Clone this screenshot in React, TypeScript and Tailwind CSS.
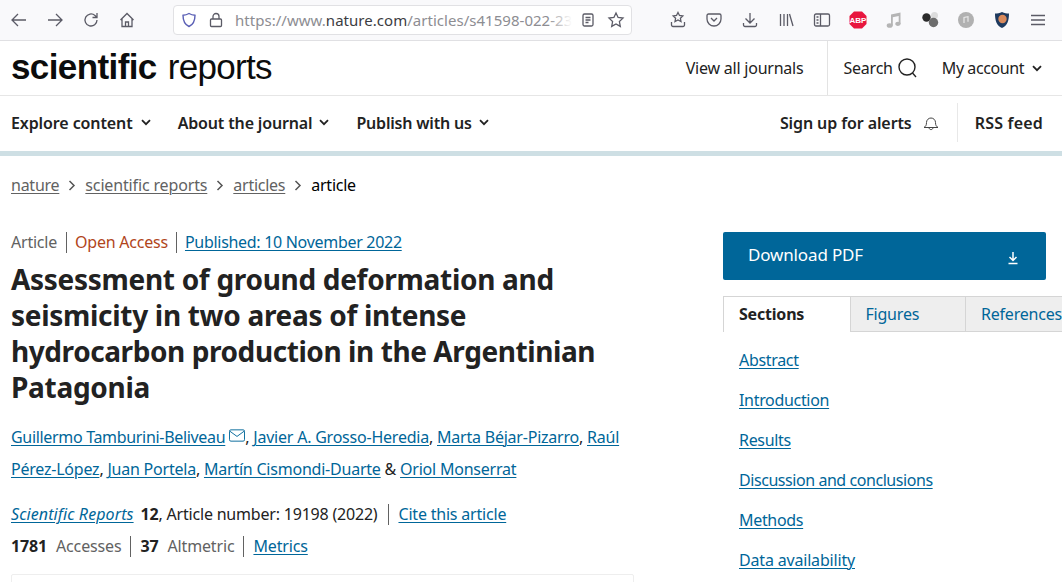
import React from "react";

const ic = "fill-none stroke-[#5b5b66] stroke-[1.3]";
const F = "font-['Noto_Sans','Open_Sans',sans-serif]";

function Chev({ cls = "" }: { cls?: string }) {
  return (
    <svg width="10" height="7" viewBox="0 0 10 7" className={cls}>
      <path d="M1 1.2 5 5.2 9 1.2" fill="none" stroke="#222" strokeWidth="1.8" />
    </svg>
  );
}

function Sep() {
  return (
    <svg width="8" height="11" viewBox="0 0 8 11" className="mx-[9px]">
      <path d="M1.5 1 6 5.5 1.5 10" fill="none" stroke="#555" strokeWidth="1.5" />
    </svg>
  );
}

function Toolbar() {
  return (
    <div className="h-[41px] bg-[#f9f9fb] border-b border-[#e0e0e3] flex items-center pl-[10px] shrink-0">
      <div className="flex items-center gap-[18px]">
        <svg width="18" height="18" viewBox="0 0 18 18" className={ic}><path d="M16 9H2M8 3 2 9l6 6" /></svg>
        <svg width="18" height="18" viewBox="0 0 18 18" className={ic}><path d="M2 9h14M10 3l6 6-6 6" /></svg>
        <svg width="18" height="18" viewBox="0 0 18 18" className={ic}><path d="M15 9a6 6 0 1 1-2-4.500L15 6.500M15 2v4.500h-4.500" /></svg>
        <svg width="18" height="18" viewBox="0 0 18 18" className={ic}><path d="M2.500 9 9 2.500 15.500 9M4 8v7.500h10V8M7.500 15.500V11h3v4.500" /></svg>
      </div>
      <div className="ml-[37px] w-[459px] h-[30px] bg-white rounded-[4px] border border-[#e1e1e4] flex items-center pl-[6px]">
        <svg width="18" height="18" viewBox="0 0 18 18" className="fill-none stroke-[#5a5fb5] stroke-[1.4]"><path d="M9 2.500c2 1.200 4 1.700 6 1.800 0 5-2 9.500-6 11.200C5 13.800 3 9.300 3 4.300c2-.1 4-.6 6-1.800Z" /></svg>
        <svg width="16" height="16" viewBox="0 0 16 16" className={`ml-[10px] ${ic}`}><rect x="2.500" y="7" width="11" height="7.500" rx="1" /><path d="M5 7V4.500a3 3 0 0 1 6 0V7" /></svg>
        <div className={`relative ml-[11px] w-[337px] overflow-hidden whitespace-nowrap text-[15px] tracking-[0.03px] text-[#8d8d92] ${F}`}>
          https://www.<span className="text-[#3c3c42]">nature.com</span>/articles/s41598-022-23
          <div className="absolute right-0 top-0 bottom-0 w-[24px] bg-gradient-to-r from-transparent to-white" />
        </div>
        <svg width="16" height="16" viewBox="0 0 16 16" className={`ml-[8px] ${ic}`}><rect x="3" y="2" width="10" height="12" rx="1.500" /><path d="M5.500 5.500h5M5.500 8h5M5.500 10.500h3" /></svg>
        <svg width="18" height="18" viewBox="0 0 18 18" className={`ml-[11px] ${ic}`}><path d="m9 2 2.100 4.500 4.900.6-3.600 3.400.9 4.900L9 13l-4.300 2.400.9-4.900L2 7.100l4.900-.6Z" /></svg>
      </div>
      <div className="ml-[37px] flex items-center gap-[18px]">
        <svg width="18" height="18" viewBox="0 0 18 18" className={ic}><path d="m9 1.500 1.500 3 3.300.5-2.400 2.300.6 3.200L9 9l-3 1.500.6-3.200L4.200 5l3.300-.5ZM2.500 11v3a1.500 1.500 0 0 0 1.500 1.500h10a1.500 1.500 0 0 0 1.500-1.500v-3" /></svg>
        <svg width="18" height="18" viewBox="0 0 18 18" className={ic}><path d="M3.500 3h11A1.500 1.500 0 0 1 16 4.500V8a7 7 0 0 1-14 0V4.500A1.500 1.500 0 0 1 3.500 3ZM6 7l3 3 3-3" /></svg>
        <svg width="18" height="18" viewBox="0 0 18 18" className={ic}><path d="M9 2v10M4.500 7.500 9 12l4.500-4.500M2.500 12v2a1.500 1.500 0 0 0 1.500 1.500h10a1.500 1.500 0 0 0 1.500-1.500v-2" /></svg>
        <svg width="18" height="18" viewBox="0 0 18 18" className={ic}><path d="M3.500 3v12M7 3v12M10.500 3v12M12.500 3l3.500 12" /></svg>
        <svg width="18" height="18" viewBox="0 0 18 18" className={ic}><rect x="1.500" y="3" width="15" height="12" rx="1.500" /><path d="M7.500 3v12M3.500 6h2M3.500 9h2M3.500 12h2" /></svg>
        <svg width="18" height="18" viewBox="0 0 18 18">
          <polygon points="5,.5 13,.5 17.500,5 17.500,13 13,17.500 5,17.500 .5,13 .5,5" fill="#e8163e" />
          <text x="9" y="11.800" textAnchor="middle" fontSize="8" fontWeight="700" fill="#fff" fontFamily="Liberation Sans">ABP</text>
        </svg>
        <svg width="18" height="18" viewBox="0 0 18 18" fill="#b5b5b5"><path d="M6 3.500 15.500 1.500v11.200h-1.800V5L7.800 6.200v8.300H6Z" /><ellipse cx="4.700" cy="14.500" rx="3" ry="2.300" /><ellipse cx="13" cy="12.800" rx="2.700" ry="2.100" /></svg>
        <svg width="18" height="18" viewBox="0 0 18 18"><circle cx="13.500" cy="4.500" r="3.500" fill="#dcdcdc" /><circle cx="5.500" cy="6.500" r="4.200" fill="#2b2b2b" /><circle cx="12.500" cy="11.500" r="4.700" fill="#6d6d6d" /></svg>
        <svg width="18" height="18" viewBox="0 0 18 18"><circle cx="9" cy="9" r="8" fill="#b1b1b1" /><path d="M7 12V6.500l4-.8v5" fill="none" stroke="#e8e8e8" strokeWidth="1.200" /></svg>
        <svg width="18" height="18" viewBox="0 0 18 18"><path d="M9 1c2.500 1.200 4.500 1.500 7 1.500 0 7-1.500 12-7 14.500C3.500 14.500 2 9.500 2 2.500 4.500 2.500 6.500 2.200 9 1Z" fill="#1e3a5f" /><circle cx="9.500" cy="8" r="4.200" fill="#d98a5c" /></svg>
        <svg width="18" height="18" viewBox="0 0 18 18" className={ic}><path d="M2 4.500h14M2 9h14M2 13.500h14" /></svg>
      </div>
    </div>
  );
}

function Header() {
  return (
    <div className="h-[55px] border-b border-[#e6e6e6] flex items-stretch pl-[11px] shrink-0">
      <div className="flex items-center font-['Liberation_Sans',sans-serif] text-[35px] leading-none text-[#0c0c0c] whitespace-nowrap pb-[4px]">
        <span className="font-bold tracking-[-0.6px]">scientific</span>
        <span className="ml-[11px] tracking-[-0.7px]">reports</span>
      </div>
      <div className="ml-auto flex items-center tracking-[-0.22px]">
        <a className="text-[#222]">View all journals</a>
        <div className="ml-[24px] w-px self-stretch bg-[#e3e3e3]" />
        <a className="ml-[15px] text-[#222]">Search</a>
        <svg width="22" height="22" viewBox="0 0 22 22" className="ml-[4px] fill-none stroke-[#222] stroke-[1.4]"><circle cx="10" cy="10" r="8" /><path d="m15.500 16 3.500 4" /></svg>
        <a className="ml-[23px] text-[#222] tracking-[-0.42px]">My account</a>
        <Chev cls="ml-[8px] mr-[20px]" />
      </div>
    </div>
  );
}

function Nav() {
  return (
    <div className="h-[55px] pb-[2px] flex items-center pl-[11px] font-semibold text-[#222] shrink-0 tracking-[-0.1px]">
      <span>Explore content</span>
      <Chev cls="ml-[8px]" />
      <span className="ml-[27px] tracking-[-0.15px]">About the journal</span>
      <Chev cls="ml-[7px]" />
      <span className="ml-[27px] tracking-[-0.2px]">Publish with us</span>
      <Chev cls="ml-[7px]" />
      <span className="ml-auto">Sign up for alerts</span>
      <svg width="18" height="18" viewBox="0 0 18 18" className="ml-[10px] fill-none stroke-[#444] stroke-[1]"><path d="M2 13.500c1.500-1 2.500-2 2.500-5a4.500 4.500 0 0 1 9 0c0 3 1 4 2.500 5ZM7 13.500c0 2.800 4 2.800 4 0" /></svg>
      <div className="ml-[17px] w-px h-[39px] bg-[#e8e8e8]" />
      <span className="ml-[17px] mr-[19px] tracking-[0.2px]">RSS feed</span>
    </div>
  );
}

const link = "text-[#069] underline underline-offset-[2px] decoration-1";

function Left() {
  return (
    <div className="w-[623px] ml-[11px] shrink-0 tracking-[-0.22px]">
      <div className="flex items-center h-[22px] leading-[22px]">
        <span className="text-[#626262]">Article</span>
        <span className="ml-[9px] mr-[8px] w-px h-[21px] bg-[#626262]" />
        <span className="text-[#b1451b]">Open Access</span>
        <span className="ml-[8px] mr-[8px] w-px h-[21px] bg-[#626262]" />
        <a className={`${link} tracking-[-0.3px]`}>Published: 10 November 2022</a>
      </div>
      <h1 className="mt-[8px] text-[28px] leading-[36px] font-bold text-[#222] w-[600px] tracking-[-0.3px]">
        Assessment of ground deformation and seismicity in two areas of intense <span className="tracking-[-0.42px]">hydrocarbon production in the Argentinian</span> Patagonia
      </h1>
      <div className="mt-[16px] leading-[32px] text-[#222] w-[620px]">
        <a className={`${link} tracking-[-0.32px]`}>Guillermo Tamburini-Beliveau</a>
        <svg width="16" height="13" viewBox="0 0 17 13" className="inline ml-[4px] align-[1px] fill-none stroke-[#069]"><rect x=".5" y=".5" width="16" height="12" rx="1.500" /><path d="m1 2 7.500 5.500L16 2" /></svg>
        , <a className={link}>Javier A. Grosso-Heredia</a>, <a className={link}>Marta Béjar-Pizarro</a>, <a className={link}>Raúl</a> <a className={link}>Pérez-López</a>, <a className={link}>Juan Portela</a>, <a className={link}>Martín Cismondi-Duarte</a> &amp; <a className={link}>Oriol Monserrat</a>
      </div>
      <div className="mt-[17px] flex items-center h-[24px] text-[#222] tracking-[-0.2px]">
        <a className={`${link} italic tracking-[0.1px]`}>Scientific Reports</a>
        <b className="ml-[7px] font-bold">12</b>
        <span>, Article number: 19198 (2022)</span>
        <span className="ml-[11px] mr-[9px] w-px h-[21px] bg-[#626262]" />
        <a className={link}>Cite this article</a>
      </div>
      <div className="mt-[8px] flex items-center h-[24px] tracking-[-0.15px]">
        <b className="font-bold text-[#222]">1781</b>
        <span className="ml-[9px] text-[#626262]">Accesses</span>
        <span className="mx-[9px] w-px h-[21px] bg-[#626262]" />
        <b className="font-bold text-[#222]">37</b>
        <span className="ml-[9px] text-[#626262]">Altmetric</span>
        <span className="mx-[9px] w-px h-[21px] bg-[#626262]" />
        <a className={link}>Metrics</a>
      </div>
      <div className="mt-[16px] h-[40px] border border-[#eeeeee] rounded-[2px]" />
    </div>
  );
}

const sections = [
  { t: "Abstract", c: "tracking-[-0.32px]" },
  { t: "Introduction", c: "tracking-[-0.32px]" },
  { t: "Results", c: "tracking-[-0.32px]" },
  { t: "Discussion and conclusions", c: "tracking-[-0.44px]" },
  { t: "Methods", c: "tracking-[-0.32px]" },
  { t: "Data availability", c: "tracking-[-0.18px]" },
];

function Right() {
  return (
    <div className="ml-[89px] mt-[1px] w-[339px] shrink-0 overflow-hidden">
      <div className="w-[323px] h-[48px] bg-[#069] rounded-[2px] flex items-center pl-[25px] pr-[27px] text-white text-[17px] tracking-[-0.15px]">
        <span className="mb-[2px]">Download PDF</span>
        <svg width="12" height="14" viewBox="0 0 12 14" className="ml-auto mt-[4px] fill-none stroke-white stroke-[1.500]"><path d="M6 1v8M2.500 6 6 9.500 9.500 6M1.500 12.500h9" /></svg>
      </div>
      <div className="mt-[16px] flex h-[36px] w-[339px] tracking-[-0.2px]">
        <div className="w-[128px] border-l border-t border-[#d5d5d5] bg-white pl-[15px] leading-[34px] font-bold text-[#222]">Sections</div>
        <div className="w-[116px] border border-[#d5d5d5] bg-[#eeeeee] pl-[14px] leading-[34px] text-[#069]">Figures</div>
        <div className="flex-1 whitespace-nowrap border-y border-[#d5d5d5] bg-[#eeeeee] pl-[15px] leading-[34px] text-[#069]">References</div>
      </div>
      <div className="pl-[16px] pt-[16px] flex flex-col gap-[16px]">
        {sections.map((s) => (
          <a key={s.t} className={`${link} ${s.c} leading-[24px] w-fit`}>{s.t}</a>
        ))}
      </div>
    </div>
  );
}

export default function App() {
  return (
    <div className={`w-[1062px] h-[582px] overflow-hidden flex flex-col bg-white text-[16px] ${F}`}>
      <Toolbar />
      <Header />
      <Nav />
      <div className="h-[5px] bg-[#cedfe4] shrink-0" />
      <div className="pl-[11px] h-[59px] flex items-center pb-[3px] shrink-0 pt-[2px] tracking-[-0.25px]">
        <a className="text-[#626262] underline underline-offset-[2px] decoration-1">nature</a>
        <Sep />
        <a className="text-[#626262] underline underline-offset-[2px] decoration-1 tracking-[-0.15px]">scientific reports</a>
        <Sep />
        <a className="text-[#626262] underline underline-offset-[2px] decoration-1">articles</a>
        <Sep />
        <span className="text-black">article</span>
      </div>
      <div className="flex pt-[16px]">
        <Left />
        <Right />
      </div>
    </div>
  );
}
